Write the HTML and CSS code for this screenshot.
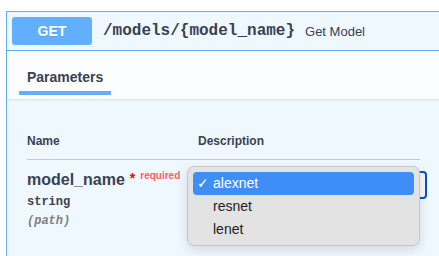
FILE: index.html
```html
<!DOCTYPE html>
<html lang="en">
<head>
    <meta charset="UTF-8">
    <title>Get Model</title>
    <link rel="stylesheet" href="styles.css">
</head>
<body>
    <div class="opblock">
        <div class="opblock-summary">
            <span class="method">GET</span>
            <span class="path">/models/{model_name}</span>
            <span class="summary">Get Model</span>
        </div>

        <div class="tab-header">
            <div class="tab-item">Parameters</div>
        </div>

        <div class="params">
            <div class="params-head">
                <div class="col-name">Name</div>
                <div class="col-desc">Description</div>
            </div>
            <div class="param-row">
                <div class="col-name">
                    <div class="param-name">model_name<span class="star">*</span><span class="required">required</span></div>
                    <div class="param-type">string</div>
                    <div class="param-in">(path)</div>
                </div>
                <div class="col-desc">
                    <div class="select-box"></div>
                    <!-- native select popup, drawn open -->
                    <div class="popup">
                        <div class="option selected"><span class="check">✓</span>alexnet</div>
                        <div class="option">resnet</div>
                        <div class="option">lenet</div>
                    </div>
                </div>
            </div>
        </div>
    </div>
</body>
</html>
```

FILE: styles.css
```css
html, body {
    overflow: hidden;
}

body {
    margin: 0;
    background: #fff;
    font-family: 'Liberation Sans', Arial, sans-serif;
    color: #3b4151;
    height: 256px;
}

.opblock {
    margin: 11px 0 0 6px;
    width: 433px;
    height: 244px;
    border: 1px solid #61affe;
    border-right: none;
    border-bottom: none;
    background: #eff7ff;
}

.opblock-summary {
    display: flex;
    align-items: center;
    padding: 5px;
    border-bottom: 1px solid #61affe;
}

.method {
    width: 80px;
    height: 28px;
    line-height: 28px;
    text-align: center;
    background: #61affe;
    color: #fff;
    font-weight: bold;
    font-size: 14px;
    border-radius: 3px;
    text-shadow: 0 1px 0 rgba(0,0,0,.1);
}

.path {
    margin-left: 11px;
    font-family: 'Liberation Mono', 'Courier New', monospace;
    font-weight: bold;
    font-size: 16px;
    color: #3b4151;
}

.summary {
    margin-left: 10px;
    font-size: 13px;
    color: #3b4151;
}

.tab-header {
    height: 48px;
    padding-left: 12px;
    background: #fbfdff;
    box-shadow: 0 1px 2px rgba(0,0,0,.1);
}

.tab-item {
    width: 92px;
    height: 44px;
    box-sizing: border-box;
    padding: 18px 0 0 8px;
    font-size: 14px;
    font-weight: bold;
    border-bottom: 4px solid #61affe;
}

.params {
    padding: 33px 20px 0 20px;
}

.params-head {
    display: flex;
    font-size: 12px;
    font-weight: bold;
    padding: 2px 0 11px;
    border-bottom: 1px solid #c3c8d0;
}

.col-name {
    width: 171px;
    flex-shrink: 0;
}

.col-desc {
    flex: 1;
    min-width: 0;
    position: relative;
}

.param-row {
    display: flex;
    padding-top: 10px;
}

.param-name {
    font-size: 16px;
    font-weight: bold;
    line-height: 20px;
}

.star {
    color: red;
    font-size: 14px;
    margin-left: 5px;
    position: relative;
    top: -2px;
}

.required {
    color: #ff6060;
    font-size: 10px;
    margin-left: 5px;
    position: relative;
    top: -6px;
}

.param-type {
    margin-top: 3px;
    font-family: 'Liberation Mono', 'Courier New', monospace;
    font-weight: bold;
    font-size: 12px;
}

.param-in {
    margin-top: 5px;
    font-family: 'Liberation Mono', 'Courier New', monospace;
    font-style: italic;
    font-weight: bold;
    font-size: 12px;
    color: #808080;
}

.select-box {
    width: 229px;
    height: 28px;
    box-sizing: border-box;
    margin-top: 1px;
    border: 2px solid #0a4fc7;
    border-radius: 4px;
    background: #f7f7f7;
}

.popup {
    position: absolute;
    left: -11px;
    top: -4px;
    width: 221px;
    height: 68px;
    padding: 5px;
    background: #e3e3e3;
    border: 1px solid #c6c6c6;
    border-radius: 7px;
    box-shadow: 0 4px 12px rgba(0,0,0,.12);
}

.option {
    height: 23px;
    line-height: 23px;
    padding-left: 20px;
    font-size: 14px;
    color: #222;
    border-radius: 4px;
    position: relative;
}

.option.selected {
    background: #3f8ef7;
    color: #fff;
}

.check {
    position: absolute;
    left: 4px;
    top: 0;
    font-size: 14px;
}
```
